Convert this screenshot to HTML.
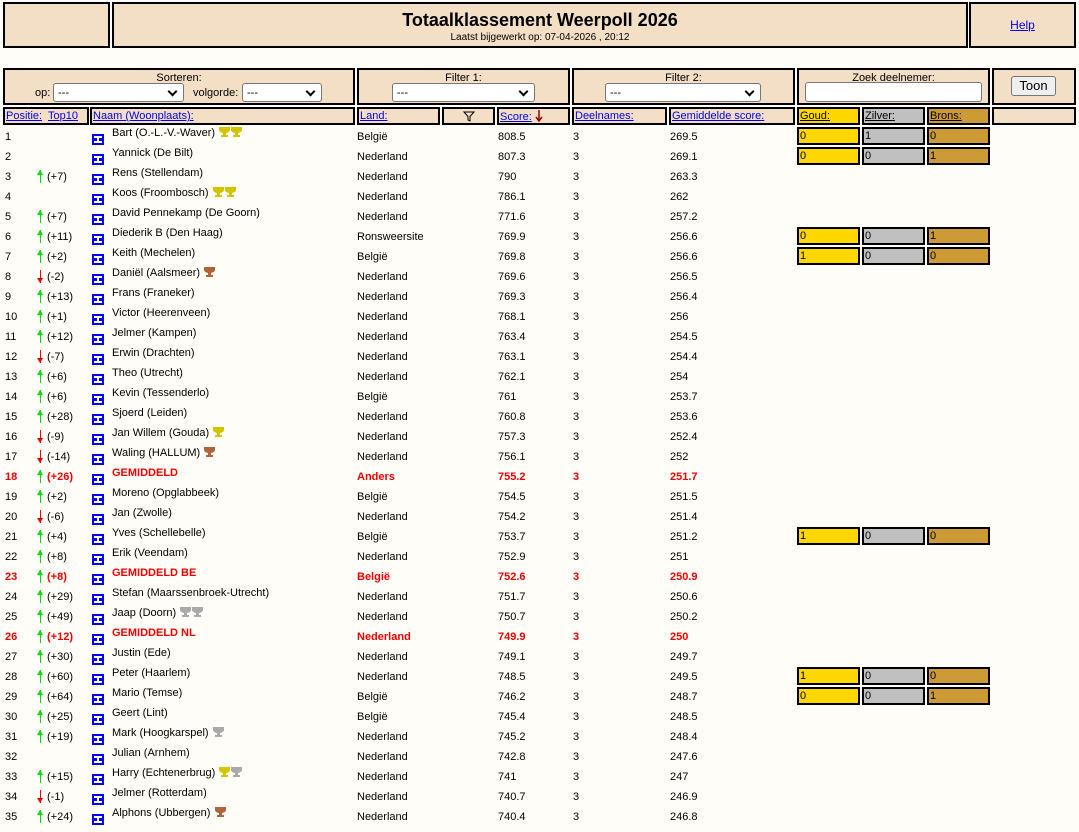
<!DOCTYPE html>
<html><head><meta charset="utf-8">
<style>
body{margin:0;width:1079px;height:832px;background:#fffdf7;font-family:"Liberation Sans",Arial,sans-serif;font-size:11px;color:#000;position:relative;overflow:hidden}
.b{position:absolute;background:#f3dfc5;border:2px solid #000;box-sizing:border-box}
.c{text-align:center}
a{color:#00e;text-decoration:underline}
.sel{position:absolute;height:19px;background:#fff;border:1px solid #767676;border-radius:3px;box-sizing:border-box;font-size:11px;padding:3px 0 0 4px}
.sel:after{content:"";position:absolute;right:7px;top:4px;width:5px;height:5px;border-right:2px solid #000;border-bottom:2px solid #000;transform:rotate(45deg)}
.h{position:absolute;top:107px;height:18px;border:2px solid #000;box-sizing:border-box;background:#f3dfc5;padding:1px 0 0 1px;font-size:11px}
.r{position:absolute;left:0;width:1079px;height:20px}
.r span{position:absolute;white-space:nowrap}
.p{left:5px;top:5px}
.r span.ch{left:37px;top:5px;padding-left:10px}
.ic{left:92px;top:8px;width:12px;height:11px;background:#00f}
.ic:before{content:"";position:absolute;left:2px;top:2px;width:8px;height:2px;background:#fff}
.ic:after{content:"";position:absolute;left:2px;top:7px;width:8px;height:2px;background:#fff}
.ic i{position:absolute;left:5px;top:3px;width:2px;height:5px;background:#fff}
.n{left:112px;top:1px}
.l{left:357px;top:5px}
.s{left:498px;top:5px}
.d{left:573px;top:5px}
.g{left:670px;top:5px}
.red{color:#e00;font-weight:bold}
.up,.dn{display:block;position:absolute;left:1px;top:-1px;width:6px;height:13px;font-size:0}
.up:before,.dn:before{content:"";position:absolute;left:2px;top:0;width:1px;height:13px;background:#0d0}
.up:after{content:"";position:absolute;left:-1px;top:0;border-left:3px solid transparent;border-right:3px solid transparent;border-bottom:5px solid #0d0}
.dn:before{background:#e00}
.dn:after{content:"";position:absolute;left:-1px;bottom:0;border-left:3px solid transparent;border-right:3px solid transparent;border-top:5px solid #e00}
.m{position:absolute;top:1px;height:18px;border:2px solid #000;box-sizing:border-box;padding:1px 0 0 1px}
.m1{left:797px;width:63px;background:#ffd700}
.m2{left:862px;width:63px;background:#c0c0c0}
.m3{left:927px;width:63px;background:#cd9b36}
.t{display:inline-block;width:11px;height:12px;margin-left:1px;vertical-align:top;position:relative;top:-1px}
</style></head><body>
<div class="b" style="left:3px;top:2px;width:107px;height:46px"></div>
<div class="b c" style="left:112px;top:2px;width:856px;height:46px"><div style="font-size:18px;font-weight:bold;margin-top:6px">Totaalklassement Weerpoll 2026</div><div style="font-size:10px;margin-top:1px">Laatst bijgewerkt op: 07-04-2026 , 20:12</div></div>
<div class="b c" style="left:969px;top:2px;width:107px;height:46px;padding-top:14px;font-size:12px"><a>Help</a></div>

<div class="b c" style="left:3px;top:68px;width:352px;height:37px;padding-top:2px">Sorteren:</div>
<span style="position:absolute;left:35px;top:87px">op:</span><div class="sel" style="left:53px;top:83px;width:131px">---</div>
<span style="position:absolute;left:193px;top:87px">volgorde:</span><div class="sel" style="left:242px;top:83px;width:80px">---</div>
<div class="b c" style="left:357px;top:68px;width:213px;height:37px;padding-top:2px">Filter 1:</div>
<div class="sel" style="left:392px;top:83px;width:143px">---</div>
<div class="b c" style="left:572px;top:68px;width:223px;height:37px;padding-top:2px">Filter 2:</div>
<div class="sel" style="left:605px;top:83px;width:156px">---</div>
<div class="b c" style="left:797px;top:68px;width:193px;height:37px;padding-top:2px">Zoek deelnemer:</div>
<div style="position:absolute;left:805px;top:82px;width:177px;height:20px;background:#fff;border:1px solid #767676;border-radius:3px;box-sizing:border-box"></div>
<div class="b" style="left:992px;top:68px;width:84px;height:37px"></div>
<div style="position:absolute;left:1011px;top:76px;width:45px;height:20px;background:#efefef;border:1px solid #767676;border-radius:3px;box-sizing:border-box;text-align:center;font-size:13px;padding-top:1px">Toon</div>

<div class="h" style="left:3px;width:86px"><a>Positie:</a>&nbsp; <a>Top10</a></div>
<div class="h" style="left:90px;width:265px"><a>Naam (Woonplaats):</a></div>
<div class="h" style="left:357px;width:83px"><a>Land:</a></div>
<div class="h c" style="left:442px;width:53px"><svg width="12" height="11" viewBox="0 0 12 11" style="margin-top:1px"><path d="M1 1H11L7 5.5V10L5 9V5.5Z" fill="none" stroke="#000"/></svg></div>
<div class="h" style="left:497px;width:73px"><a>Score:</a> <svg width="8" height="12" viewBox="0 0 8 12" style="vertical-align:-2px"><path d="M4 0V11M1 7L4 11L7 7" fill="none" stroke="#900" stroke-width="1.5"/></svg></div>
<div class="h" style="left:572px;width:95px"><a>Deelnames:</a></div>
<div class="h" style="left:669px;width:126px"><a>Gemiddelde score:</a></div>
<div class="h" style="left:797px;width:63px;background:#ffd700"><a style="color:#000">Goud:</a></div>
<div class="h" style="left:862px;width:63px;background:#c0c0c0"><a style="color:#000">Zilver:</a></div>
<div class="h" style="left:927px;width:63px;background:#cd9b36"><a style="color:#000">Brons:</a></div>
<div class="h" style="left:992px;width:84px"></div>

<svg width="0" height="0" style="position:absolute"><defs>
<symbol id="cup" viewBox="0 0 11 12"><path d="M0 1H11V4Q11 6 7 7V9H9V11H2V9H4V7Q0 6 0 4Z"/></symbol></defs></svg>

<div class="r" style="top:126px"><span class="p">1</span><span class="ic"><i></i></span><span class="n">Bart (O.-L.-V.-Waver) <svg class="t" fill="#d4c400"><use href="#cup"/></svg><svg class="t" fill="#d4c400"><use href="#cup"/></svg></span><span class="l">België</span><span class="s">808.5</span><span class="d">3</span><span class="g">269.5</span><div class="m m1">0</div><div class="m m2">1</div><div class="m m3">0</div></div>
<div class="r" style="top:146px"><span class="p">2</span><span class="ic"><i></i></span><span class="n">Yannick (De Bilt)</span><span class="l">Nederland</span><span class="s">807.3</span><span class="d">3</span><span class="g">269.1</span><div class="m m1">0</div><div class="m m2">0</div><div class="m m3">1</div></div>
<div class="r" style="top:166px"><span class="p">3</span><span class="ch"><b class="up">↑</b>(+7)</span><span class="ic"><i></i></span><span class="n">Rens (Stellendam)</span><span class="l">Nederland</span><span class="s">790</span><span class="d">3</span><span class="g">263.3</span></div>
<div class="r" style="top:186px"><span class="p">4</span><span class="ic"><i></i></span><span class="n">Koos (Froombosch) <svg class="t" fill="#d4c400"><use href="#cup"/></svg><svg class="t" fill="#d4c400"><use href="#cup"/></svg></span><span class="l">Nederland</span><span class="s">786.1</span><span class="d">3</span><span class="g">262</span></div>
<div class="r" style="top:206px"><span class="p">5</span><span class="ch"><b class="up">↑</b>(+7)</span><span class="ic"><i></i></span><span class="n">David Pennekamp (De Goorn)</span><span class="l">Nederland</span><span class="s">771.6</span><span class="d">3</span><span class="g">257.2</span></div>
<div class="r" style="top:226px"><span class="p">6</span><span class="ch"><b class="up">↑</b>(+11)</span><span class="ic"><i></i></span><span class="n">Diederik B (Den Haag)</span><span class="l">Ronsweersite</span><span class="s">769.9</span><span class="d">3</span><span class="g">256.6</span><div class="m m1">0</div><div class="m m2">0</div><div class="m m3">1</div></div>
<div class="r" style="top:246px"><span class="p">7</span><span class="ch"><b class="up">↑</b>(+2)</span><span class="ic"><i></i></span><span class="n">Keith (Mechelen)</span><span class="l">België</span><span class="s">769.8</span><span class="d">3</span><span class="g">256.6</span><div class="m m1">1</div><div class="m m2">0</div><div class="m m3">0</div></div>
<div class="r" style="top:266px"><span class="p">8</span><span class="ch"><b class="dn">↓</b>(-2)</span><span class="ic"><i></i></span><span class="n">Daniël (Aalsmeer) <svg class="t" fill="#b0643c"><use href="#cup"/></svg></span><span class="l">Nederland</span><span class="s">769.6</span><span class="d">3</span><span class="g">256.5</span></div>
<div class="r" style="top:286px"><span class="p">9</span><span class="ch"><b class="up">↑</b>(+13)</span><span class="ic"><i></i></span><span class="n">Frans (Franeker)</span><span class="l">Nederland</span><span class="s">769.3</span><span class="d">3</span><span class="g">256.4</span></div>
<div class="r" style="top:306px"><span class="p">10</span><span class="ch"><b class="up">↑</b>(+1)</span><span class="ic"><i></i></span><span class="n">Victor (Heerenveen)</span><span class="l">Nederland</span><span class="s">768.1</span><span class="d">3</span><span class="g">256</span></div>
<div class="r" style="top:326px"><span class="p">11</span><span class="ch"><b class="up">↑</b>(+12)</span><span class="ic"><i></i></span><span class="n">Jelmer (Kampen)</span><span class="l">Nederland</span><span class="s">763.4</span><span class="d">3</span><span class="g">254.5</span></div>
<div class="r" style="top:346px"><span class="p">12</span><span class="ch"><b class="dn">↓</b>(-7)</span><span class="ic"><i></i></span><span class="n">Erwin (Drachten)</span><span class="l">Nederland</span><span class="s">763.1</span><span class="d">3</span><span class="g">254.4</span></div>
<div class="r" style="top:366px"><span class="p">13</span><span class="ch"><b class="up">↑</b>(+6)</span><span class="ic"><i></i></span><span class="n">Theo (Utrecht)</span><span class="l">Nederland</span><span class="s">762.1</span><span class="d">3</span><span class="g">254</span></div>
<div class="r" style="top:386px"><span class="p">14</span><span class="ch"><b class="up">↑</b>(+6)</span><span class="ic"><i></i></span><span class="n">Kevin (Tessenderlo)</span><span class="l">België</span><span class="s">761</span><span class="d">3</span><span class="g">253.7</span></div>
<div class="r" style="top:406px"><span class="p">15</span><span class="ch"><b class="up">↑</b>(+28)</span><span class="ic"><i></i></span><span class="n">Sjoerd (Leiden)</span><span class="l">Nederland</span><span class="s">760.8</span><span class="d">3</span><span class="g">253.6</span></div>
<div class="r" style="top:426px"><span class="p">16</span><span class="ch"><b class="dn">↓</b>(-9)</span><span class="ic"><i></i></span><span class="n">Jan Willem (Gouda) <svg class="t" fill="#d4c400"><use href="#cup"/></svg></span><span class="l">Nederland</span><span class="s">757.3</span><span class="d">3</span><span class="g">252.4</span></div>
<div class="r" style="top:446px"><span class="p">17</span><span class="ch"><b class="dn">↓</b>(-14)</span><span class="ic"><i></i></span><span class="n">Waling (HALLUM) <svg class="t" fill="#b0643c"><use href="#cup"/></svg></span><span class="l">Nederland</span><span class="s">756.1</span><span class="d">3</span><span class="g">252</span></div>
<div class="r red" style="top:466px"><span class="p">18</span><span class="ch"><b class="up">↑</b>(+26)</span><span class="ic"><i></i></span><span class="n">GEMIDDELD</span><span class="l">Anders</span><span class="s">755.2</span><span class="d">3</span><span class="g">251.7</span></div>
<div class="r" style="top:486px"><span class="p">19</span><span class="ch"><b class="up">↑</b>(+2)</span><span class="ic"><i></i></span><span class="n">Moreno (Opglabbeek)</span><span class="l">België</span><span class="s">754.5</span><span class="d">3</span><span class="g">251.5</span></div>
<div class="r" style="top:506px"><span class="p">20</span><span class="ch"><b class="dn">↓</b>(-6)</span><span class="ic"><i></i></span><span class="n">Jan (Zwolle)</span><span class="l">Nederland</span><span class="s">754.2</span><span class="d">3</span><span class="g">251.4</span></div>
<div class="r" style="top:526px"><span class="p">21</span><span class="ch"><b class="up">↑</b>(+4)</span><span class="ic"><i></i></span><span class="n">Yves (Schellebelle)</span><span class="l">België</span><span class="s">753.7</span><span class="d">3</span><span class="g">251.2</span><div class="m m1">1</div><div class="m m2">0</div><div class="m m3">0</div></div>
<div class="r" style="top:546px"><span class="p">22</span><span class="ch"><b class="up">↑</b>(+8)</span><span class="ic"><i></i></span><span class="n">Erik (Veendam)</span><span class="l">Nederland</span><span class="s">752.9</span><span class="d">3</span><span class="g">251</span></div>
<div class="r red" style="top:566px"><span class="p">23</span><span class="ch"><b class="up">↑</b>(+8)</span><span class="ic"><i></i></span><span class="n">GEMIDDELD BE</span><span class="l">België</span><span class="s">752.6</span><span class="d">3</span><span class="g">250.9</span></div>
<div class="r" style="top:586px"><span class="p">24</span><span class="ch"><b class="up">↑</b>(+29)</span><span class="ic"><i></i></span><span class="n">Stefan (Maarssenbroek-Utrecht)</span><span class="l">Nederland</span><span class="s">751.7</span><span class="d">3</span><span class="g">250.6</span></div>
<div class="r" style="top:606px"><span class="p">25</span><span class="ch"><b class="up">↑</b>(+49)</span><span class="ic"><i></i></span><span class="n">Jaap (Doorn) <svg class="t" fill="#aaa"><use href="#cup"/></svg><svg class="t" fill="#aaa"><use href="#cup"/></svg></span><span class="l">Nederland</span><span class="s">750.7</span><span class="d">3</span><span class="g">250.2</span></div>
<div class="r red" style="top:626px"><span class="p">26</span><span class="ch"><b class="up">↑</b>(+12)</span><span class="ic"><i></i></span><span class="n">GEMIDDELD NL</span><span class="l">Nederland</span><span class="s">749.9</span><span class="d">3</span><span class="g">250</span></div>
<div class="r" style="top:646px"><span class="p">27</span><span class="ch"><b class="up">↑</b>(+30)</span><span class="ic"><i></i></span><span class="n">Justin (Ede)</span><span class="l">Nederland</span><span class="s">749.1</span><span class="d">3</span><span class="g">249.7</span></div>
<div class="r" style="top:666px"><span class="p">28</span><span class="ch"><b class="up">↑</b>(+60)</span><span class="ic"><i></i></span><span class="n">Peter (Haarlem)</span><span class="l">Nederland</span><span class="s">748.5</span><span class="d">3</span><span class="g">249.5</span><div class="m m1">1</div><div class="m m2">0</div><div class="m m3">0</div></div>
<div class="r" style="top:686px"><span class="p">29</span><span class="ch"><b class="up">↑</b>(+64)</span><span class="ic"><i></i></span><span class="n">Mario (Temse)</span><span class="l">België</span><span class="s">746.2</span><span class="d">3</span><span class="g">248.7</span><div class="m m1">0</div><div class="m m2">0</div><div class="m m3">1</div></div>
<div class="r" style="top:706px"><span class="p">30</span><span class="ch"><b class="up">↑</b>(+25)</span><span class="ic"><i></i></span><span class="n">Geert (Lint)</span><span class="l">België</span><span class="s">745.4</span><span class="d">3</span><span class="g">248.5</span></div>
<div class="r" style="top:726px"><span class="p">31</span><span class="ch"><b class="up">↑</b>(+19)</span><span class="ic"><i></i></span><span class="n">Mark (Hoogkarspel) <svg class="t" fill="#aaa"><use href="#cup"/></svg></span><span class="l">Nederland</span><span class="s">745.2</span><span class="d">3</span><span class="g">248.4</span></div>
<div class="r" style="top:746px"><span class="p">32</span><span class="ic"><i></i></span><span class="n">Julian (Arnhem)</span><span class="l">Nederland</span><span class="s">742.8</span><span class="d">3</span><span class="g">247.6</span></div>
<div class="r" style="top:766px"><span class="p">33</span><span class="ch"><b class="up">↑</b>(+15)</span><span class="ic"><i></i></span><span class="n">Harry (Echtenerbrug) <svg class="t" fill="#d4c400"><use href="#cup"/></svg><svg class="t" fill="#aaa"><use href="#cup"/></svg></span><span class="l">Nederland</span><span class="s">741</span><span class="d">3</span><span class="g">247</span></div>
<div class="r" style="top:786px"><span class="p">34</span><span class="ch"><b class="dn">↓</b>(-1)</span><span class="ic"><i></i></span><span class="n">Jelmer (Rotterdam)</span><span class="l">Nederland</span><span class="s">740.7</span><span class="d">3</span><span class="g">246.9</span></div>
<div class="r" style="top:806px"><span class="p">35</span><span class="ch"><b class="up">↑</b>(+24)</span><span class="ic"><i></i></span><span class="n">Alphons (Ubbergen) <svg class="t" fill="#b0643c"><use href="#cup"/></svg></span><span class="l">Nederland</span><span class="s">740.4</span><span class="d">3</span><span class="g">246.8</span></div>
</body></html>
